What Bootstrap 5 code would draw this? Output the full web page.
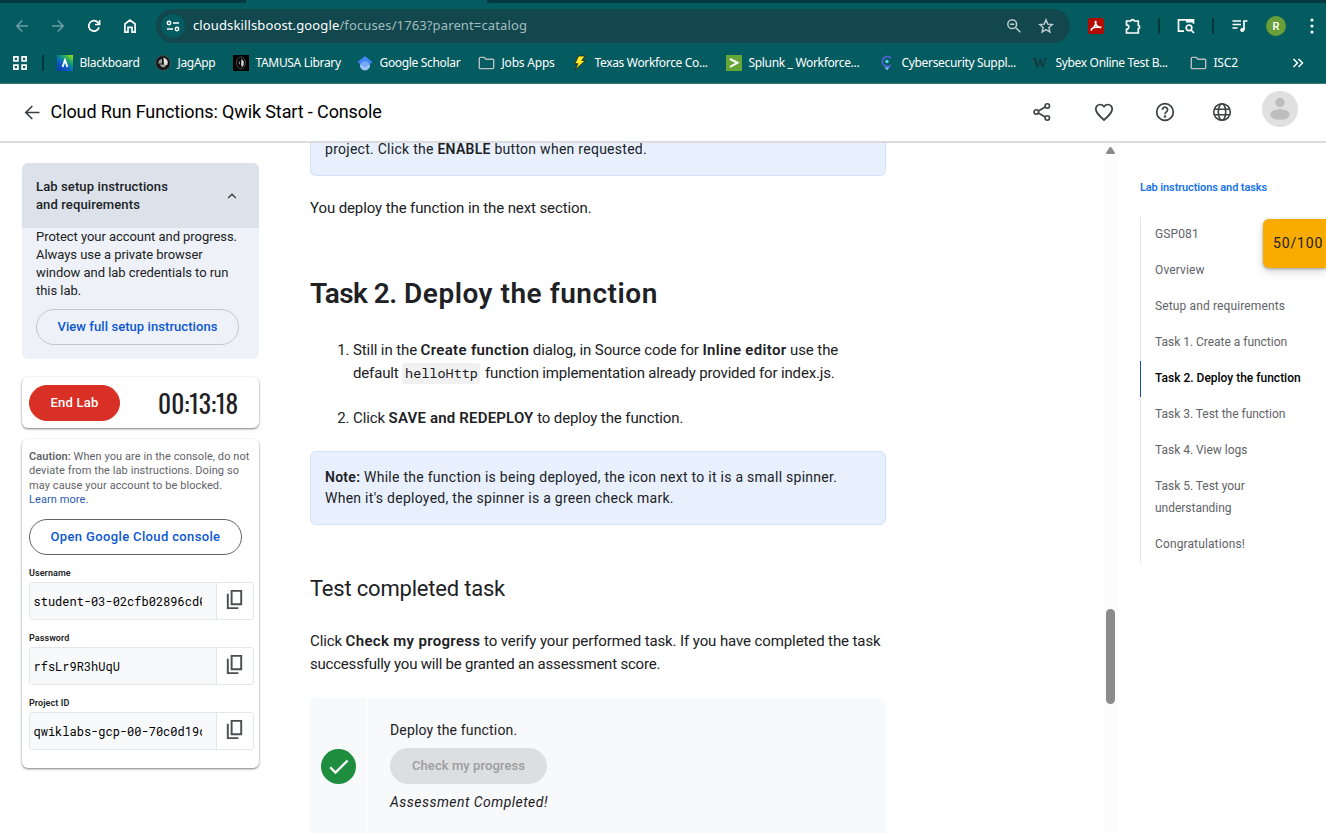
<!DOCTYPE html>
<html lang="en">
<head>
<meta charset="utf-8">
<meta name="viewport" content="width=device-width, initial-scale=1">
<title>Cloud Run Functions: Qwik Start - Console</title>
<link rel="stylesheet" href="https://cdn.jsdelivr.net/npm/bootstrap@5.3.0/dist/css/bootstrap.min.css">
<style>
body{font-family:Roboto,"Open Sans",sans-serif;color:#202124;height:833px;overflow:hidden;background:#fff}
svg{display:block;flex:none}
/* browser chrome */
.chrome{height:84px;background:#045b60;border-bottom:1px solid #36797d;font-family:"Noto Sans","Open Sans",sans-serif;color:#fff}
.tabstrip{height:3px;background:#033a3f}
.tabstrip div{margin-left:246px;width:241px;height:3px;background:#045b60}
.toolbar-row{height:46px;background:#045b60}
.navcells{display:grid;grid-template-columns:repeat(4,36px);margin-left:4px;width:152px;place-items:center start}
.navcells svg,.extcells>*{margin:auto}
.omnibox{width:914px;height:34px;border-radius:17px;background:#11474d;padding:0 15px 0 5px}
.siteinfo{width:24px;height:24px;border-radius:50%;background:#045b60}
.url{font-size:13px;letter-spacing:.126px;color:#a3bcbe;margin-left:8px}
.extcells{display:grid;grid-template-columns:52px 22px 30px 24px 30px 24px 48px 24px;align-items:center}
.vsep{width:2px;height:16px;background:#03393e}
.userdot{width:20px;height:20px;border-radius:50%;background:#689f38;font:500 11px Roboto,sans-serif}
.bookmarks{display:grid;grid-template-columns:33px 12px 98px 78px 124px 121px 94px 154px 153px 154px 157px 102px 24px;margin-left:12px;height:28px;align-items:center;font-size:12px;letter-spacing:-.33px;white-space:nowrap}
.bookmarks>div{display:flex;align-items:center;gap:6.5px}
/* page header */
.lab-header{height:59px;border-bottom:2px solid #dadce0;padding:0 28px 2px 22px;color:#3c4043}
.lab-title{font-size:18px;letter-spacing:-.12px;color:#000;margin-left:8.6px}
.avatar{width:36px;height:36px;border-radius:50%;background:#e0e0e0;margin-top:-6px;overflow:hidden}
/* sidebar */
.viewport-row{height:690px}
.sidebar{width:259px;padding:20px 0 0 22px;flex:none}
.setup{height:196px;background:#eef2f8;border-radius:6px;overflow:hidden;font-size:13px;line-height:18px;letter-spacing:-.048px}
.setup-head{height:65px;background:#dbe2ea;padding:15px 22px 0 14px;font-weight:500;letter-spacing:.116px}
.pill{height:36px;border-radius:18px;font-size:13px;font-weight:500;line-height:34px;padding:0;text-align:center;color:#0b57d0;border:1px solid #c4c7c5;display:block}
.panel{background:#fff;border-radius:6px;box-shadow:0 1px 2px rgba(60,64,67,.55),0 1px 3px rgba(60,64,67,.2)}
.endlab{width:91px;background:#d93025;border-color:#d93025;color:#fff;letter-spacing:.24px}
.clock{font:400 25.4px/36px Oswald,"Roboto Condensed",sans-serif;width:81px;white-space:nowrap}
.caution{font-size:11px;line-height:14.4px;letter-spacing:.079px;color:#5f6368}
.cred-label{font-size:9px;font-weight:600;line-height:12px;letter-spacing:.08px}
.cred{height:38px;width:225px;border:1px solid #e4e6ea;border-radius:3px;margin-top:3px;margin-bottom:12px}
.cred-val{width:187px;background:#f8f9fb;border-right:1px solid #e4e6ea;font:12px/36px "Roboto Mono","DejaVu Sans Mono",monospace;color:#000;padding:0 14px 0 3.5px}
.cred-val div{overflow:hidden;white-space:nowrap}
.cred svg{margin:5.5px 0 0 6px}
/* lab content */
.lab-body{width:576px;margin-left:51px;flex:none;font-size:15px;line-height:23px;letter-spacing:-.105px;white-space:nowrap}
.note{background:#e8f0fe;border:1px solid #d2e3fc;border-radius:6px;font-size:14px;line-height:21px;letter-spacing:.27px;padding:0 14px}
.lab-body b{font-weight:600;letter-spacing:.32px}
.lab-body .caps{letter-spacing:.18px}
.lab-body .note b{letter-spacing:.27px}
.task-title{font-size:28px;font-weight:600;line-height:36px;letter-spacing:.52px;margin:0}
.task-title span{letter-spacing:-.55px}
.sub-title{font-size:22px;font-weight:400;line-height:30px;letter-spacing:-.2px;margin:0}
.lab-body code{font:13.5px/20px "Roboto Mono","DejaVu Sans Mono",monospace;letter-spacing:0;background:#f1f1f1;color:#202124;padding:1px 2px 2px 3px;border-radius:2px;margin:0 1.5px 0 0}
.activity{height:140px;border-radius:6px 6px 0 0;background:#f8f9fb;font-size:14px;line-height:20px}
.activity-mark{width:58px;border-right:1px solid #fff}
.activity-main{padding:22px 0 0 22px;letter-spacing:.16px}
.checkbtn{width:157px;background:#dddee0;border-color:#dddee0;color:#9b9c9e;letter-spacing:.076px}
.track{width:15px;background:#fcfcfc;margin-left:217px;flex:none}
.thumb{width:9px;height:95px;border-radius:5px;background:#8b8b8b;margin-top:455px}
/* outline */
.toc{width:186px;margin-left:22px;font-size:12px;line-height:22px;letter-spacing:.124px;color:#5f6368;white-space:nowrap}
.toc-head{font-size:11px;font-weight:600;color:#1a73e8;letter-spacing:-.115px;line-height:16px;padding-top:37px;margin-bottom:21px}
.toc-item{border-left:1px solid #e3e5e8;padding:6px 0 8px 14px}
.toc-item.task{letter-spacing:-.02px}
.toc-item.current{border-color:#174ea6;color:#000;font-weight:500;letter-spacing:0}
.score{position:absolute;right:0;top:219px;width:63px;height:49px;background:#f9ab00;border-radius:6px 0 0 6px;box-shadow:0 1px 3px rgba(60,64,67,.4),0 4px 8px rgba(60,64,67,.2);font-size:14px;line-height:48px;letter-spacing:.85px;padding-left:10px;color:#202124}
</style>
</head>
<body>
<svg width="0" height="0" class="position-absolute">
  <defs>
    <symbol id="copy" viewBox="0 0 24 24"><path fill="none" stroke="#4a4d51" stroke-width="2" d="M9 3h10v14H9zM5 6v15h11"/></symbol>
    <symbol id="folder" viewBox="0 0 16 16"><path fill="none" stroke="#b9bfc0" stroke-width="1.4" d="M.8 3.200q0-.8.8-.8h4.200l1.700 1.800h6.900q.8 0 .8.8v7.800q0 .8-.8.8H1.600q-.8 0-.8-.8z"/></symbol>
  </defs>
</svg>

<header class="chrome">
  <div class="tabstrip"><div></div></div>
  <div class="toolbar-row d-flex align-items-center">
    <div class="navcells">
      <svg width="14" height="14" viewBox="0 0 14 14" fill="none" stroke="#6c9ea1" stroke-width="1.6"><path d="M13 7H2M7.300 1.500 1.800 7l5.500 5.500"/></svg>
      <svg width="14" height="14" viewBox="0 0 14 14" fill="none" stroke="#6c9ea1" stroke-width="1.6"><path d="M1 7h11M6.700 1.500 12.200 7l-5.500 5.500"/></svg>
      <svg width="14" height="14" viewBox="0 0 14 14" fill="none" stroke="#fff" stroke-width="1.7"><path d="M12 8.200A5.200 5.200 0 1 1 10.900 3.500L12.500 5.100M12.600 1v4.500H8"/></svg>
      <svg width="14" height="16" viewBox="0 0 14 16" fill="none" stroke="#fff" stroke-width="1.700"><path d="M1.900 6 7 2l5.100 4v8.100H9V9.300H5v4.800H1.900z"/></svg>
    </div>
    <div class="omnibox d-flex align-items-center">
      <div class="siteinfo d-flex align-items-center justify-content-center"><svg width="14" height="12" viewBox="0 0 14 12" fill="none" stroke="#fff" stroke-width="1.500"><circle cx="3" cy="3" r="1.700"/><path d="M7 3h6M1 9h6"/><circle cx="11" cy="9" r="1.700"/></svg></div>
      <div class="url"><span class="text-white">cloudskillsboost.google</span>/focuses/1763?parent=catalog</div>
      <svg class="ms-auto" width="16" height="16" viewBox="0 0 16 16" fill="none" stroke="#c0cdcf" stroke-width="1.500"><circle cx="6.200" cy="6.200" r="4.400"/><path d="M9.500 9.500 14.300 14.300M4 6.200h4.400"/></svg>
      <svg style="margin-left:16px;margin-right:1px" width="16" height="16" viewBox="0 0 16 16" fill="none" stroke="#c0cdcf" stroke-width="1.400"><path d="m8 1.900 1.800 4.200 4.500.4-3.400 3 1 4.500L8 11.600 4.100 14l1-4.500-3.400-3 4.500-.4z"/></svg>
    </div>
    <div class="extcells">
      <svg width="16" height="16" viewBox="0 0 16 16"><rect width="16" height="16" rx="2.500" fill="#b30b00"/><path fill="none" stroke="#fff" stroke-width="1.300" d="M7.500 3.300c1.500.3.300 4-4.300 8.800-.6-1.400 3-3.500 9.700-3 .2 1.500-5-.6-5.800-4.700 0-.6 0-1 .4-1.100z"/></svg>
      <svg width="17" height="17" viewBox="0 0 17 17"><path fill="none" stroke="#fff" stroke-width="1.700" d="M1.500 3h4.300a1.800 1.800 0 0 1 3.500 0h4v4.300a1.800 1.800 0 0 1 0 3.500V15H1.500v-3.700a2.200 2.200 0 0 0 0-4.500z"/></svg>
      <div class="vsep"></div>
      <svg width="18" height="16" viewBox="0 0 18 16" fill="none" stroke="#fff" stroke-width="1.700"><path d="M7 13.200H1.500V1.800h15v4"/><path stroke-width="3" d="M9 3h7.500"/><circle cx="12" cy="9.800" r="2.800"/><path d="m14 12 3 3"/></svg>
      <div class="vsep"></div>
      <svg width="16" height="14" viewBox="0 0 16 14" fill="none" stroke="#fff" stroke-width="1.700"><path d="M.5 2H9M.5 5.500H9M.5 9h5M12 11V2h3.500"/><circle cx="10.300" cy="11" r="1.700" fill="#fff" stroke-width=".8"/></svg>
      <div class="userdot d-flex align-items-center justify-content-center">R</div>
      <svg width="4" height="16" viewBox="0 0 4 16" fill="#fff"><circle cx="2" cy="2" r="1.600"/><circle cx="2" cy="8" r="1.600"/><circle cx="2" cy="14" r="1.600"/></svg>
    </div>
  </div>
  <div class="bookmarks">
    <svg width="16" height="16" viewBox="0 0 16 16" fill="none" stroke="#fff" stroke-width="1.700"><path d="M1.900 1.900h4v4h-4zM10.100 1.900h4v4h-4zM1.900 10.100h4v4h-4zM10.100 10.100h4v4h-4z"/></svg>
    <div style="margin-left:-3px"><span class="vsep"></span></div>
    <div><svg width="16" height="16" viewBox="0 0 16 16"><defs><linearGradient id="bb" x1="1" y1="0" x2=".2" y2="1"><stop stop-color="#b5ea00"/><stop offset=".35" stop-color="#18a06a"/><stop offset=".65" stop-color="#0b62c4"/><stop offset="1" stop-color="#0b3fb0"/></linearGradient></defs><rect width="16" height="16" fill="url(#bb)"/><path fill="none" stroke="#fff" stroke-width="1.800" d="M5.600 12 8 5l2.400 7"/></svg><span>Blackboard</span></div>
    <div><svg width="16" height="16" viewBox="0 0 16 16"><circle cx="8" cy="8" r="7.400" fill="#151515" stroke="#666" stroke-width=".6"/><path fill="#e4e4e4" d="M8.500 2.500q3.500 1 4.300 4.500l-.6 3-3.200.5z"/><path fill="#999" d="m3 8.500 1-3 3-2v5zM4.500 9.500h7l-2 3-3-.5z"/></svg><span>JagApp</span></div>
    <div><svg width="16" height="16" viewBox="0 0 16 16"><path fill="#000" d="M0 0h16v16H0z"/><ellipse cx="8" cy="8" rx="4.500" ry="6" fill="none" stroke="#555" stroke-width=".9"/><path fill="#ddd" d="m8.500 3.500 2.200 3V10l-2 2.500-.5-4z"/><path fill="#888" d="M5.500 8 7 5.500V10z"/></svg><span>TAMUSA Library</span></div>
    <div><svg width="16" height="16" viewBox="0 0 16 16"><circle cx="8" cy="10.500" r="5" fill="#a0c3ff"/><path fill="#4285f4" d="M8 1 .5 7.300 8 12l7.500-4.700z"/><path fill="#76a7fa" d="M3.500 9a5 5 0 0 1 9 0L8 12z"/></svg><span>Google Scholar</span></div>
    <div><svg width="17" height="16"><use href="#folder"/></svg><span style="letter-spacing:-.2px">Jobs Apps</span></div>
    <div><svg width="16" height="16" viewBox="0 0 16 16"><path fill="#ffe92b" stroke="#221f00" stroke-width=".8" d="M6.500 1H13L9.800 5.500h3.500L3 15l3-6.300H2.800z"/></svg><span>Texas Workforce Co...</span></div>
    <div><svg width="16" height="16" viewBox="0 0 16 16"><path fill="#65a637" d="M0 0h16v16H0z"/><path fill="none" stroke="#fff" stroke-width="2" d="m4 4 7.500 3.800L4 11.800"/></svg><span>Splunk _ Workforce...</span></div>
    <div><svg width="16" height="16" viewBox="0 0 16 16"><path fill="none" stroke="#4362c4" stroke-width="2.300" d="M12 3.200A5 5 0 1 0 12 10"/><circle cx="8" cy="6.500" r="1.700" fill="#58d5ec"/><path fill="#7ab6f5" d="M5.500 12.300h5L8 15.500z"/></svg><span>Cybersecurity Suppl...</span></div>
    <div><span style="width:16px;font:15px 'Liberation Serif',serif;color:#1d2b2d;letter-spacing:0">W</span><span>Sybex Online Test B...</span></div>
    <div><svg width="17" height="16"><use href="#folder"/></svg><span style="letter-spacing:-.2px">ISC2</span></div>
    <svg width="12" height="10" viewBox="0 0 12 10" fill="none" stroke="#fff" stroke-width="1.500"><path d="m1.500 1 4 4-4 4M6.500 1l4 4-4 4"/></svg>
  </div>
</header>

<div class="lab-header d-flex align-items-center">
  <svg width="20" height="20" viewBox="0 0 20 20" fill="none" stroke="#3c4043" stroke-width="1.700"><path d="M17.500 10.500H4M10.300 4 3.800 10.500l6.500 6.500"/></svg>
  <div class="lab-title">Cloud Run Functions: Qwik Start - Console</div>
  <div class="d-flex align-items-center ms-auto">
    <svg width="20" height="20" viewBox="0 0 20 20" fill="none" stroke="#3c4043" stroke-width="1.600"><circle cx="15.300" cy="4" r="2.200"/><circle cx="4.300" cy="10" r="2.200"/><circle cx="15.300" cy="16" r="2.200"/><path d="m6.300 9 7-4M6.300 11l7 4"/></svg>
    <svg style="margin-left:41px" width="22" height="20" viewBox="0 0 22 20" fill="none" stroke="#3c4043" stroke-width="1.700"><path d="M11 18C6 13.500 2.800 10.600 2.800 7A4.300 4.300 0 0 1 7.100 2.500C8.700 2.500 10 3.300 11 4.600c1-1.300 2.300-2.100 3.900-2.100A4.300 4.300 0 0 1 19.200 7c0 3.600-3.200 6.500-8.200 11z"/></svg>
    <svg style="margin-left:40px" width="20" height="20" viewBox="0 0 20 20" fill="none" stroke="#3c4043" stroke-width="1.700"><circle cx="10" cy="10" r="8.300"/><path d="M7.400 7.800a2.600 2.600 0 1 1 4 2.100c-.9.700-1.400 1.100-1.400 2.300"/><circle cx="10" cy="14.500" r=".5"/></svg>
    <svg style="margin-left:37px" width="20" height="20" viewBox="0 0 20 20" fill="none" stroke="#3c4043" stroke-width="1.600"><circle cx="10" cy="10" r="8.300"/><ellipse cx="10" cy="10" rx="3.700" ry="8.300"/><path d="M2.300 7.200h15.400M2.300 12.800h15.400"/></svg>
    <div class="avatar" style="margin-left:30px"><svg width="36" height="36" viewBox="0 0 36 36" fill="#bdbdbd"><circle cx="18" cy="11.500" r="4.700"/><ellipse cx="18" cy="23.500" rx="9.700" ry="5.300"/></svg></div>
  </div>
</div>

<div class="viewport-row d-flex overflow-hidden">
  <aside class="sidebar">
    <section class="setup">
      <div class="setup-head d-flex justify-content-between"><div>Lab setup instructions<br>and requirements</div><svg style="margin-top:14px" width="10" height="8" viewBox="0 0 10 8" fill="none" stroke="#3c4043" stroke-width="1.500"><path d="m1.200 6 3.800-3.700L8.800 6"/></svg></div>
      <div class="ps-3 text-nowrap" style="margin-left:-2px">Protect your account and progress.<br>Always use a private browser<br>window and lab credentials to run<br>this lab.
        <button class="btn pill" style="width:203px;margin-top:9px;letter-spacing:.068px">View full setup instructions</button>
      </div>
    </section>
    <section class="panel d-flex justify-content-between" style="height:51px;margin-top:18px;padding:8px 20px 0 7px">
      <button class="btn pill endlab">End Lab</button>
      <div class="clock">00:13:18</div>
    </section>
    <section class="panel" style="height:329px;margin-top:11px;padding:11px 0 0 7px">
      <div class="caution text-nowrap"><b style="font-weight:600">Caution:</b> When you are in the console, do not<br>deviate from the lab instructions. Doing so<br>may cause your account to be blocked.<br><span style="color:#2a5db0">Learn more.</span></div>
      <button class="btn pill" style="width:213px;border-color:#5f6368;margin:11px 0 12px;letter-spacing:.36px">Open Google Cloud console</button>
      <div class="cred-label">Username</div>
      <div class="cred d-flex"><div class="cred-val"><div>student-03-02cfb02896cd0</div></div><svg width="23" height="23"><use href="#copy"/></svg></div>
      <div class="cred-label">Password</div>
      <div class="cred d-flex"><div class="cred-val"><div>rfsLr9R3hUqU</div></div><svg width="23" height="23"><use href="#copy"/></svg></div>
      <div class="cred-label">Project ID</div>
      <div class="cred d-flex"><div class="cred-val"><div>qwiklabs-gcp-00-70c0d19c</div></div><svg width="23" height="23"><use href="#copy"/></svg></div>
    </section>
  </aside>

  <main class="lab-body">
    <div class="note border-top-0" style="height:33px;line-height:13px;border-radius:0 0 6px 6px">project. Click the <b>ENABLE</b> button when requested.</div>
    <p class="mb-0" style="margin-top:21px">You deploy the function in the next section.</p>
    <h1 class="task-title" style="margin-top:56px"><span>Task 2.</span> Deploy the function</h1>
    <ol class="mb-0" style="margin-top:27px;padding-left:43px">
      <li>Still in the <b>Create function</b> dialog, in Source code for <b>Inline editor</b> use the<br><span style="letter-spacing:-.16px">default <code>helloHttp</code> function implementation already provided for index.js.</span></li>
      <li style="margin-top:22px">Click <b class="caps">SAVE and REDEPLOY</b> to deploy the function.</li>
    </ol>
    <div class="note" style="height:74px;margin-top:21px;padding-top:15px"><b>Note:</b> While the function is being deployed, the icon next to it is a small spinner.<br>When it's deployed, the spinner is a green check mark.</div>
    <h2 class="sub-title" style="margin-top:49px">Test completed task</h2>
    <p style="margin:26px 0 0">Click <b>Check my progress</b> to verify your performed task. If you have completed the task<br><span style="letter-spacing:-.21px">successfully you will be granted an assessment score.</span></p>
    <div class="activity d-flex" style="margin-top:22px">
      <div class="activity-mark"><svg style="margin:51px 0 0 11px" width="35" height="35" viewBox="0 0 35 35"><circle cx="17.500" cy="17.500" r="17.500" fill="#1e8e3e"/><path fill="none" stroke="#fff" stroke-width="2.300" d="m9.200 18.300 5.300 5.300L26.600 11.500"/></svg></div>
      <div class="activity-main">
        <div>Deploy the function.</div>
        <div class="pill checkbtn" style="margin:8px 0">Check my progress</div>
        <div class="fst-italic" style="letter-spacing:.47px">Assessment Completed!</div>
      </div>
    </div>
  </main>

  <div class="track d-flex flex-column align-items-center"><svg style="margin-top:4px" width="9" height="7" viewBox="0 0 9 7"><path fill="#8b8b8b" d="M3.500.6q1-1.100 2 0L8.800 5.500Q9.200 7 8 7H1Q-.2 7 .2 5.500z"/></svg><div class="thumb"></div></div>

  <nav class="toc">
    <div class="toc-head">Lab instructions and tasks</div>
    <div class="toc-item">GSP081</div>
    <div class="toc-item">Overview</div>
    <div class="toc-item">Setup and requirements</div>
    <div class="toc-item task">Task 1. Create a function</div>
    <div class="toc-item current">Task 2. Deploy the function</div>
    <div class="toc-item task">Task 3. Test the function</div>
    <div class="toc-item task">Task 4. View logs</div>
    <div class="toc-item task">Task 5. Test your<br>understanding</div>
    <div class="toc-item">Congratulations!</div>
  </nav>
</div>
<div class="score">50/100</div>
<script src="https://cdn.jsdelivr.net/npm/bootstrap@5.3.0/dist/js/bootstrap.bundle.min.js"></script>
</body>
</html>
